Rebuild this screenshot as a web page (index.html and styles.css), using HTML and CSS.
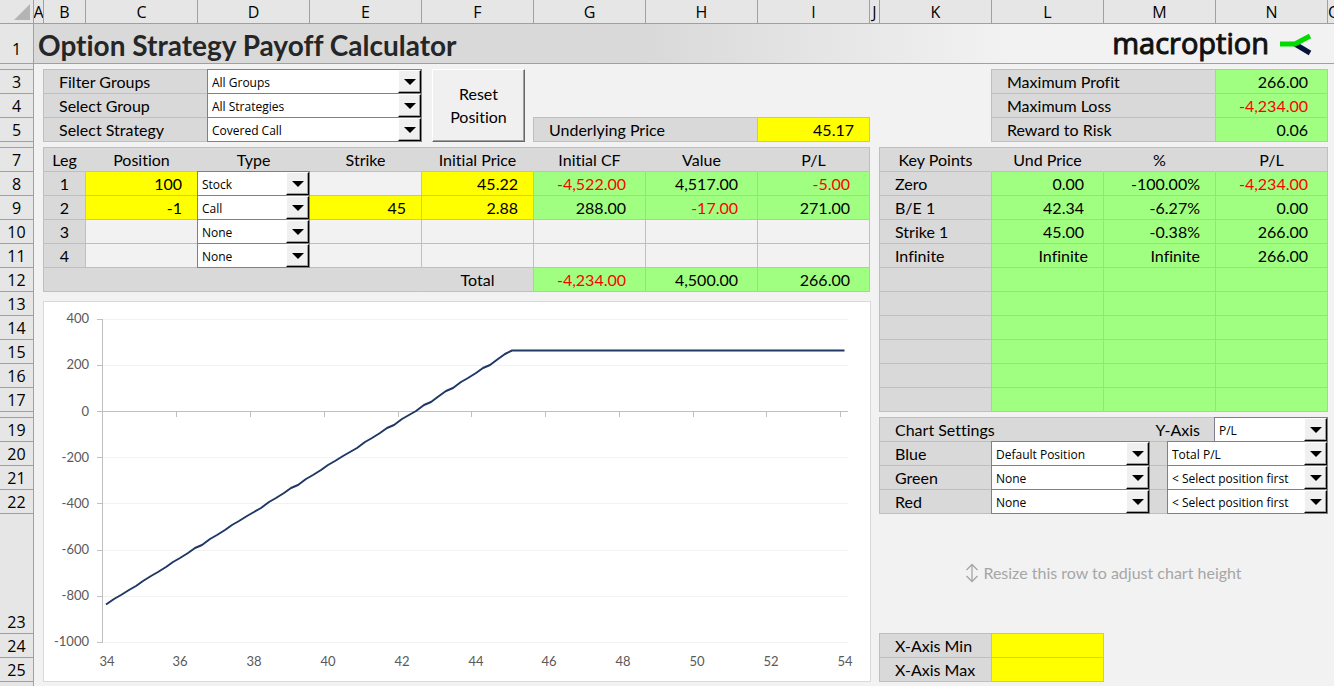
FILE: index.html
```
<!DOCTYPE html>
<html lang="en">
<head>
<meta charset="utf-8">
<title>Option Strategy Payoff Calculator</title>
<link rel="stylesheet" href="styles.css">
</head>
<body>
<div class="sheet">
  <div class="col-heads">
    <span class="corner"><svg width="16" height="16" viewBox="0 0 16 16" aria-hidden="true"><path d="M16 0V16H0Z" fill="#b4b4b4"/></svg></span>
    <span>A</span><span>B</span><span>C</span><span>D</span><span>E</span><span>F</span><span>G</span><span>H</span><span>I</span><span>J</span><span>K</span><span>L</span><span>M</span><span>N</span><span>O</span>
  </div>
  <div class="body">
    <div class="row-heads">
      <span class="title-row">1</span><span class="thin"></span>
      <span>3</span><span>4</span><span>5</span><span class="thin"></span>
      <span>7</span><span>8</span><span>9</span><span>10</span><span>11</span><span>12</span><span>13</span><span>14</span><span>15</span><span>16</span><span>17</span><span class="thin"></span>
      <span>19</span><span>20</span><span>21</span><span>22</span><span class="tall">23</span><span>24</span><span>25</span><span class="rest"></span>
    </div>
    <main class="main">
      <header class="title-bar">
        <h1>Option Strategy Payoff Calculator</h1>
        <div class="logo">macroption
          <svg width="32" height="24" viewBox="0 0 32 24" aria-hidden="true"><path d="M15 11L30 20" stroke="#06143c" stroke-width="5" fill="none"/><path d="M0 11H15L30 3" stroke="#00dc00" stroke-width="5" fill="none"/></svg>
        </div>
      </header>
      <div class="content">
        <section class="left">
          <div class="top">
            <div class="filters">
              <label for="fg">Filter Groups</label><div class="combo"><select id="fg"><option>All Groups</option></select><i></i></div>
              <label for="sg">Select Group</label><div class="combo"><select id="sg"><option>All Strategies</option></select><i></i></div>
              <label for="ss">Select Strategy</label><div class="combo"><select id="ss"><option>Covered Call</option></select><i></i></div>
            </div>
            <button class="reset" type="button">Reset<br>Position</button>
            <div class="underlying"><label for="up">Underlying Price</label><input id="up" value="45.17"></div>
          </div>
          <table class="grid legs">
            <colgroup><col class="leg-col"><col><col><col><col><col><col><col></colgroup>
            <thead><tr><th>Leg</th><th>Position</th><th>Type</th><th>Strike</th><th>Initial Price</th><th>Initial CF</th><th>Value</th><th>P/L</th></tr></thead>
            <tbody>
              <tr><td class="leg">1</td><td class="in"><input aria-label="Leg 1 position" value="100"></td><td class="pick"><div class="combo"><select aria-label="Leg 1 type"><option>Stock</option></select><i></i></div></td><td></td><td class="in"><input aria-label="Leg 1 initial price" value="45.22"></td><td class="out neg">-4,522.00</td><td class="out">4,517.00</td><td class="out neg">-5.00</td></tr>
              <tr><td class="leg">2</td><td class="in"><input aria-label="Leg 2 position" value="-1"></td><td class="pick"><div class="combo"><select aria-label="Leg 2 type"><option>Call</option></select><i></i></div></td><td class="in"><input aria-label="Leg 2 strike" value="45"></td><td class="in"><input aria-label="Leg 2 initial price" value="2.88"></td><td class="out">288.00</td><td class="out neg">-17.00</td><td class="out">271.00</td></tr>
              <tr><td class="leg">3</td><td></td><td class="pick"><div class="combo"><select aria-label="Leg 3 type"><option>None</option></select><i></i></div></td><td></td><td></td><td></td><td></td><td></td></tr>
              <tr><td class="leg">4</td><td></td><td class="pick"><div class="combo"><select aria-label="Leg 4 type"><option>None</option></select><i></i></div></td><td></td><td></td><td></td><td></td><td></td></tr>
            </tbody>
            <tfoot><tr><th colspan="4"></th><th class="total">Total</th><td class="out neg">-4,234.00</td><td class="out">4,500.00</td><td class="out">266.00</td></tr></tfoot>
          </table>
          <div class="chart">
            <svg viewBox="44 302 826 379" role="img" aria-label="Payoff chart">
              <path class="gridline" d="M103 319.5H848M103 365.5H848M103 457.5H848M103 503.5H848M103 550.5H848M103 596.5H848M103 642.5H848"/>
              <path class="axis" d="M102.5 319V643M97 319.5H102M97 365.5H102M97 411.5H848M97 457.5H102M97 503.5H102M97 550.5H102M97 596.5H102M97 642.5H102M176.5 411V417M250.5 411V417M324.5 411V417M398.5 411V417M471.5 411V417M545.5 411V417M619.5 411V417M693.5 411V417M766.5 411V417M840.5 411V417"/>
              <polyline class="payoff" points="106,604.5 114,599 121,595 129,590 136,586 143,581 151,576 158,572 166,567 173,562 180,558 188,553 195,548 202,545 210,539 217,535 225,530 232,525 239,521 247,516 254,512 261,508 269,502 276,498 284,493 291,488 298,485 306,479 313,475 321,470 328,465 335,461 343,456 350,452 357,448 365,442 372,438 380,433 387,428 394,425 402,419 409,415 416,411 424,405 431,402 439,396 446,391 453,388 461,382 468,378 476,373 483,368 490,365 498,359 505,354 512,350.5 844.5,350.5"/>
              <g class="ylab"><text x="89" y="323">400</text><text x="89" y="369">200</text><text x="89" y="416">0</text><text x="89" y="462">-200</text><text x="89" y="508">-400</text><text x="89" y="554">-600</text><text x="89" y="600">-800</text><text x="89" y="646">-1000</text></g>
              <g class="xlab"><text x="107" y="666">34</text><text x="180" y="666">36</text><text x="254" y="666">38</text><text x="328" y="666">40</text><text x="402" y="666">42</text><text x="476" y="666">44</text><text x="549" y="666">46</text><text x="623" y="666">48</text><text x="697" y="666">50</text><text x="771" y="666">52</text><text x="845" y="666">54</text></g>
            </svg>
          </div>
        </section>
        <section class="right">
          <table class="grid metrics">
            <tbody>
              <tr><th colspan="2">Maximum Profit</th><td class="out">266.00</td></tr>
              <tr><th colspan="2">Maximum Loss</th><td class="out neg">-4,234.00</td></tr>
              <tr><th colspan="2">Reward to Risk</th><td class="out">0.06</td></tr>
            </tbody>
          </table>
          <table class="grid points">
            <thead><tr><th>Key Points</th><th>Und Price</th><th>%</th><th>P/L</th></tr></thead>
            <tbody>
              <tr><th>Zero</th><td class="out">0.00</td><td class="out wide">-100.00%</td><td class="out neg">-4,234.00</td></tr>
              <tr><th>B/E 1</th><td class="out">42.34</td><td class="out wide">-6.27%</td><td class="out">0.00</td></tr>
              <tr><th>Strike 1</th><td class="out">45.00</td><td class="out wide">-0.38%</td><td class="out">266.00</td></tr>
              <tr><th>Infinite</th><td class="out wide">Infinite</td><td class="out wide">Infinite</td><td class="out">266.00</td></tr>
              <tr><th></th><td class="out"></td><td class="out"></td><td class="out"></td></tr>
              <tr><th></th><td class="out"></td><td class="out"></td><td class="out"></td></tr>
              <tr><th></th><td class="out"></td><td class="out"></td><td class="out"></td></tr>
              <tr><th></th><td class="out"></td><td class="out"></td><td class="out"></td></tr>
              <tr><th></th><td class="out"></td><td class="out"></td><td class="out"></td></tr>
              <tr><th></th><td class="out"></td><td class="out"></td><td class="out"></td></tr>
            </tbody>
          </table>
          <div class="settings">
            <div class="set-head"><span>Chart Settings</span><label for="ya">Y-Axis</label><div class="combo"><select id="ya"><option>P/L</option></select><i></i></div></div>
            <div class="set-row"><label for="c1">Blue</label><div class="combo"><select id="c1"><option>Default Position</option></select><i></i></div><span></span><div class="combo"><select aria-label="Blue series"><option>Total P/L</option></select><i></i></div></div>
            <div class="set-row"><label for="c2">Green</label><div class="combo"><select id="c2"><option>None</option></select><i></i></div><span></span><div class="combo"><select aria-label="Green series"><option>&lt; Select position first</option></select><i></i></div></div>
            <div class="set-row"><label for="c3">Red</label><div class="combo"><select id="c3"><option>None</option></select><i></i></div><span></span><div class="combo"><select aria-label="Red series"><option>&lt; Select position first</option></select><i></i></div></div>
          </div>
          <p class="note"><svg width="14" height="20" viewBox="0 0 14 20" aria-hidden="true"><path d="M7 2V18M1.500 7L7 1.500L12.500 7M1.500 13L7 18.500L12.500 13" fill="none" stroke="#a6a6a6" stroke-width="1.300"/></svg>Resize this row to adjust chart height</p>
          <div class="limits">
            <label for="xmin">X-Axis Min</label><input id="xmin">
            <label for="xmax">X-Axis Max</label><input id="xmax">
          </div>
        </section>
      </div>
    </main>
  </div>
</div>
</body>
</html>
```
FILE: styles.css
```
* { box-sizing: border-box; }
:root {
  --line: #bfbfbf;
  --label: #d9d9d9;
  --paper: #f2f2f2;
  --yellow: #ffff00;
  --green: #a0ff80;
  --head: #e6e6e6;
  --head-line: #a0a0a0;
}
body {
  margin: 0;
  background: var(--paper);
  color: #000;
  font: 16px/23px Lato, "Open Sans", sans-serif;
  font-variant-ligatures: none;
}
.sheet { height: 100vh; overflow: hidden; display: flex; flex-direction: column; }

/* Sheet headings */
.col-heads {
  display: grid;
  grid-template-columns: 34px 10px 42px repeat(7, minmax(0, 1fr)) 10px repeat(4, minmax(0, 1fr)) 6px;
  height: 24px;
  flex: none;
  background: var(--head);
  border-bottom: 1px solid var(--head-line);
  font-family: "Open Sans", sans-serif;
  line-height: 24px;
}
.col-heads span {
  display: flex;
  justify-content: center;
  overflow: hidden;
  border-right: 1px solid var(--head-line);
}
.col-heads .corner { justify-content: flex-end; align-items: center; padding-right: 3px; }
.col-heads span:last-child { justify-content: flex-start; border-right: 0; }
.body { flex: 1; display: flex; min-height: 0; }
.row-heads {
  width: 34px;
  flex: none;
  display: flex;
  flex-direction: column;
  background: var(--head);
  border-right: 1px solid var(--head-line);
  font-family: "Open Sans", sans-serif;
  line-height: 22px;
}
.row-heads span {
  height: 24px;
  flex: none;
  display: flex;
  align-items: flex-end;
  justify-content: center;
  border-bottom: 1px solid var(--head-line);
}
.row-heads .title-row { height: 40px; padding-bottom: 3px; }
.row-heads .thin { height: 6px; }
.row-heads .tall { height: 120px; }
.row-heads .rest { flex: 1; border: 0; }

/* Title */
.main { flex: 1; min-width: 0; }
.title-bar {
  height: 40px;
  display: flex;
  align-items: center;
  justify-content: space-between;
  padding: 3px 22px 0 4px;
  border-bottom: 1px solid var(--head-line);
  background: linear-gradient(90deg, #d9d9d9 47%, #f2f2f2 75%);
}
h1 { margin: 0; font-size: 28px; line-height: 36px; color: #262626; }
.logo {
  display: flex;
  align-items: center;
  gap: 11px;
  padding-bottom: 5px;
  font-family: "Open Sans", sans-serif;
  font-size: 29px;
  line-height: 32px;
  color: #111;
  -webkit-text-stroke: 1px #111;
}
.logo svg { margin-top: 4px; }

/* Panels */
.content {
  display: grid;
  grid-template-columns: 42px repeat(7, minmax(0, 1fr)) 10px repeat(4, minmax(0, 1fr));
  padding: 5px 6px 0 10px;
}
.left, .right { display: flex; flex-direction: column; gap: 5px; margin-left: -1px; }
.left { grid-column: 1 / 9; }
.right { grid-column: 10 / 14; }
.top {
  display: grid;
  grid-template-columns: 42px repeat(7, minmax(0, 1fr));
  padding-left: 1px;
}
.filters {
  grid-column: 1 / 5;
  margin-left: -1px;
  display: grid;
  grid-template-columns: 164fr 214fr;
  border-top: 1px solid var(--line);
  border-left: 1px solid var(--line);
}
.filters label, .underlying label, .limits label {
  height: 24px;
  background: var(--label);
  border-right: 1px solid var(--line);
  border-bottom: 1px solid var(--line);
  padding-left: 15px;
}
.reset {
  margin: 0 9px 0 10px;
  font: inherit;
  color: #000;
  background: #f0f0f0;
  border: 1px solid;
  border-color: #fff #696969 #696969 #fff;
  box-shadow: inset -1px -1px #a0a0a0;
  padding: 0 0 2px;
}
.underlying {
  grid-column: 6 / 9;
  margin-left: -1px;
  align-self: end;
  display: grid;
  grid-template-columns: 2fr 1fr;
  border-top: 1px solid var(--line);
  border-left: 1px solid var(--line);
}
input {
  display: block;
  width: 100%;
  min-width: 0;
  height: 23px;
  margin: 0;
  padding: 0 15px 0 0;
  border: 0;
  border-radius: 0;
  background: var(--yellow);
  color: #000;
  font: inherit;
  text-align: right;
}
.underlying input, .limits input {
  height: 24px;
  border-right: 1px solid var(--line);
  border-bottom: 1px solid var(--line);
}

/* Drop-downs */
.combo {
  position: relative;
  height: 25px;
  margin: -1px 0 0 -1px;
  border: 1px solid #7f7f8f;
  background: #fff;
}
.combo select {
  display: block;
  width: 100%;
  height: 23px;
  padding: 2px 24px 0 4px;
  border: 0;
  border-radius: 0;
  background: transparent;
  appearance: none;
  color: #000;
  font: 12px/21px "Open Sans", "Noto Sans", sans-serif;
}
.combo i {
  position: absolute;
  top: 0;
  right: 0;
  width: 23px;
  height: 23px;
  background: #f0f0f0;
  border: 1px solid;
  border-color: #fff #000 #000 #fff;
  box-shadow: inset -1px -1px #a0a0a0;
  display: flex;
  align-items: center;
  justify-content: center;
  pointer-events: none;
}
.combo i::before {
  content: "";
  border: 6px solid transparent;
  border-top-color: #000;
  border-bottom: 0;
}

/* Cell tables */
.grid {
  width: 100%;
  table-layout: fixed;
  border-collapse: separate;
  border-spacing: 0;
  border-top: 1px solid var(--line);
  border-left: 1px solid var(--line);
}
.grid th, .grid td {
  height: 24px;
  padding: 0;
  font-weight: normal;
  border-right: 1px solid var(--line);
  border-bottom: 1px solid var(--line);
}
.grid th { background: var(--label); text-align: left; padding-left: 15px; }
.grid thead th { text-align: center; padding: 0; border-right-color: var(--label); }
.grid thead th:last-child { border-right-color: var(--line); }
.leg-col { width: 42px; }
.grid .leg { background: var(--label); text-align: center; }
.grid tfoot th { border-right-color: var(--label); }
.grid .total { text-align: center; padding: 0; border-right-color: var(--line); }
.grid .out { background: var(--green); text-align: right; padding-right: 19px; }
.grid .wide { padding-right: 15px; }
.grid .neg { color: #ff0000; }
.grid .pick { border: 0; }
.pick .combo { margin-bottom: 0; }
.metrics { width: calc((100% - 1px) * 0.75 + 1px); align-self: flex-end; }

/* Chart */
.chart {
  margin: 4px -1px 0 0;
  height: 381px;
  border: 1px solid #d9d9d9;
  background: #fff;
}
.chart svg { display: block; width: 100%; height: 100%; }
.gridline { stroke: #f2f2f2; fill: none; }
.axis { stroke: #bfbfbf; fill: none; }
.payoff { stroke: #203864; stroke-width: 2; fill: none; stroke-linejoin: round; }
.chart text { font-size: 13px; fill: #595959; }
.ylab { text-anchor: end; }
.xlab { text-anchor: middle; }

/* Chart settings */
.settings {
  border-top: 1px solid var(--line);
  border-left: 1px solid var(--line);
  background: var(--label);
}
.set-head, .set-row { display: grid; height: 24px; }
.set-head { grid-template-columns: 223fr 112fr 113fr; }
.set-row { grid-template-columns: 112fr 158fr 18fr 160fr; }
.set-head span, .set-head label, .set-row label, .set-row span { border-bottom: 1px solid var(--line); }
.set-head span, .set-row label { padding-left: 15px; }
.set-head label { text-align: right; padding-right: 15px; }
.set-row label { border-right: 1px solid var(--line); }
.note {
  height: 119px;
  margin: -5px 0;
  padding-bottom: 2px;
  display: flex;
  align-items: center;
  justify-content: center;
  gap: 4px;
  color: #a6a6a6;
}
.limits {
  width: calc((100% - 1px) / 2 + 1px);
  display: grid;
  grid-template-columns: 1fr 1fr;
  border-top: 1px solid var(--line);
  border-left: 1px solid var(--line);
}
```
